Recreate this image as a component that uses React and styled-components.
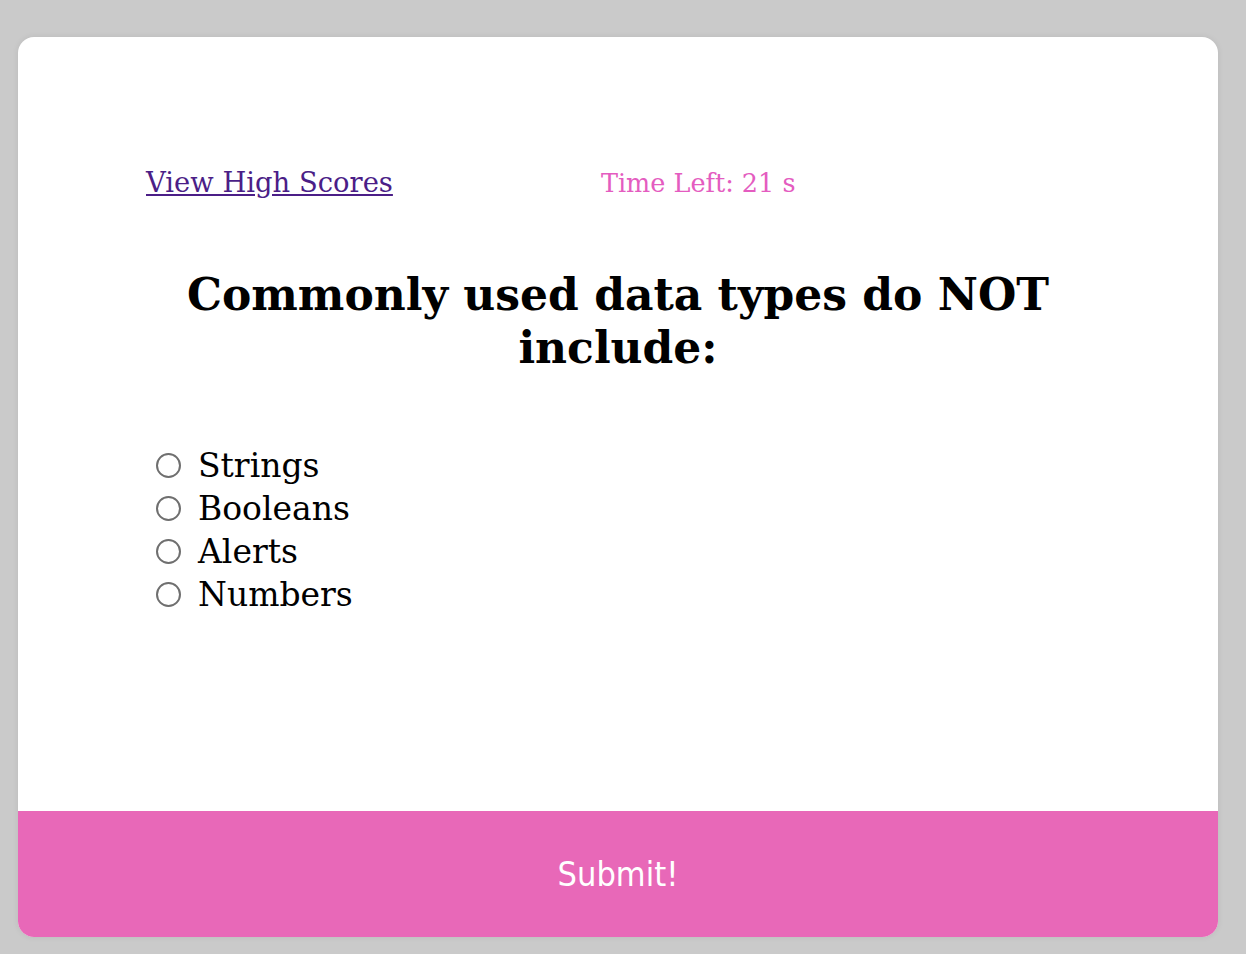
import React, { useState } from "react";
import styled, { createGlobalStyle } from "styled-components";

const GlobalStyle = createGlobalStyle`
  html, body {
    margin: 0;
    padding: 0;
    background: #cacaca;
  }
  body {
    font-family: "DejaVu Serif", Georgia, serif;
  }
`;

const Page = styled.div`
  padding: 37px 28px 17px 18px;
`;

const Card = styled.div`
  width: 1200px;
  height: 900px;
  background: #fff;
  border-radius: 16px;
  box-shadow: 0 0 6px rgba(0, 0, 0, 0.08);
  overflow: hidden;
  display: flex;
  flex-direction: column;
`;

const Body = styled.div`
  flex: 1;
  padding: 130px 128px 0 128px;
`;

const TopBar = styled.div`
  display: flex;
  align-items: baseline;
  gap: 208px;
  font-size: 27.4px;
`;

const HighScores = styled.a`
  color: #4b1e87;
  text-decoration: underline;
`;

const Timer = styled.span`
  color: #e45cc0;
  font-size: 25.5px;
`;

const Question = styled.h2`
  margin: 70px 0 0;
  text-align: center;
  font-size: 44px;
  font-weight: bold;
  line-height: 53px;
`;

const Options = styled.div`
  margin-top: 70px;
  padding-left: 10px;
  display: flex;
  flex-direction: column;
`;

const Option = styled.label`
  display: flex;
  align-items: center;
  height: 43px;
  font-size: 33px;
  color: #000;
`;

const Radio = styled.input`
  appearance: none;
  box-sizing: border-box;
  width: 25px;
  height: 25px;
  margin: 0 17px 0 0;
  border: 2px solid #6f6f6f;
  border-radius: 50%;
  background: #fff;

  &:checked {
    background: radial-gradient(circle, #6f6f6f 0 6px, #fff 7px);
  }
`;

const SubmitButton = styled.button`
  height: 126px;
  border: none;
  background: #e868b8;
  color: #fff;
  font-family: "DejaVu Sans Condensed", "DejaVu Sans", Verdana, sans-serif;
  font-size: 34px;
`;

const choices = ["Strings", "Booleans", "Alerts", "Numbers"];

export default function App() {
  const [picked, setPicked] = useState(null);
  return (
    <Page>
      <GlobalStyle />
      <Card>
        <Body>
          <TopBar>
            <HighScores href="#">View High Scores</HighScores>
            <Timer>Time Left: 21 s</Timer>
          </TopBar>
          <Question>Commonly used data types do NOT include:</Question>
          <Options>
            {choices.map((c) => (
              <Option key={c}>
                <Radio
                  type="radio"
                  name="answer"
                  checked={picked === c}
                  onChange={() => setPicked(c)}
                />
                {c}
              </Option>
            ))}
          </Options>
        </Body>
        <SubmitButton>Submit!</SubmitButton>
      </Card>
    </Page>
  );
}
